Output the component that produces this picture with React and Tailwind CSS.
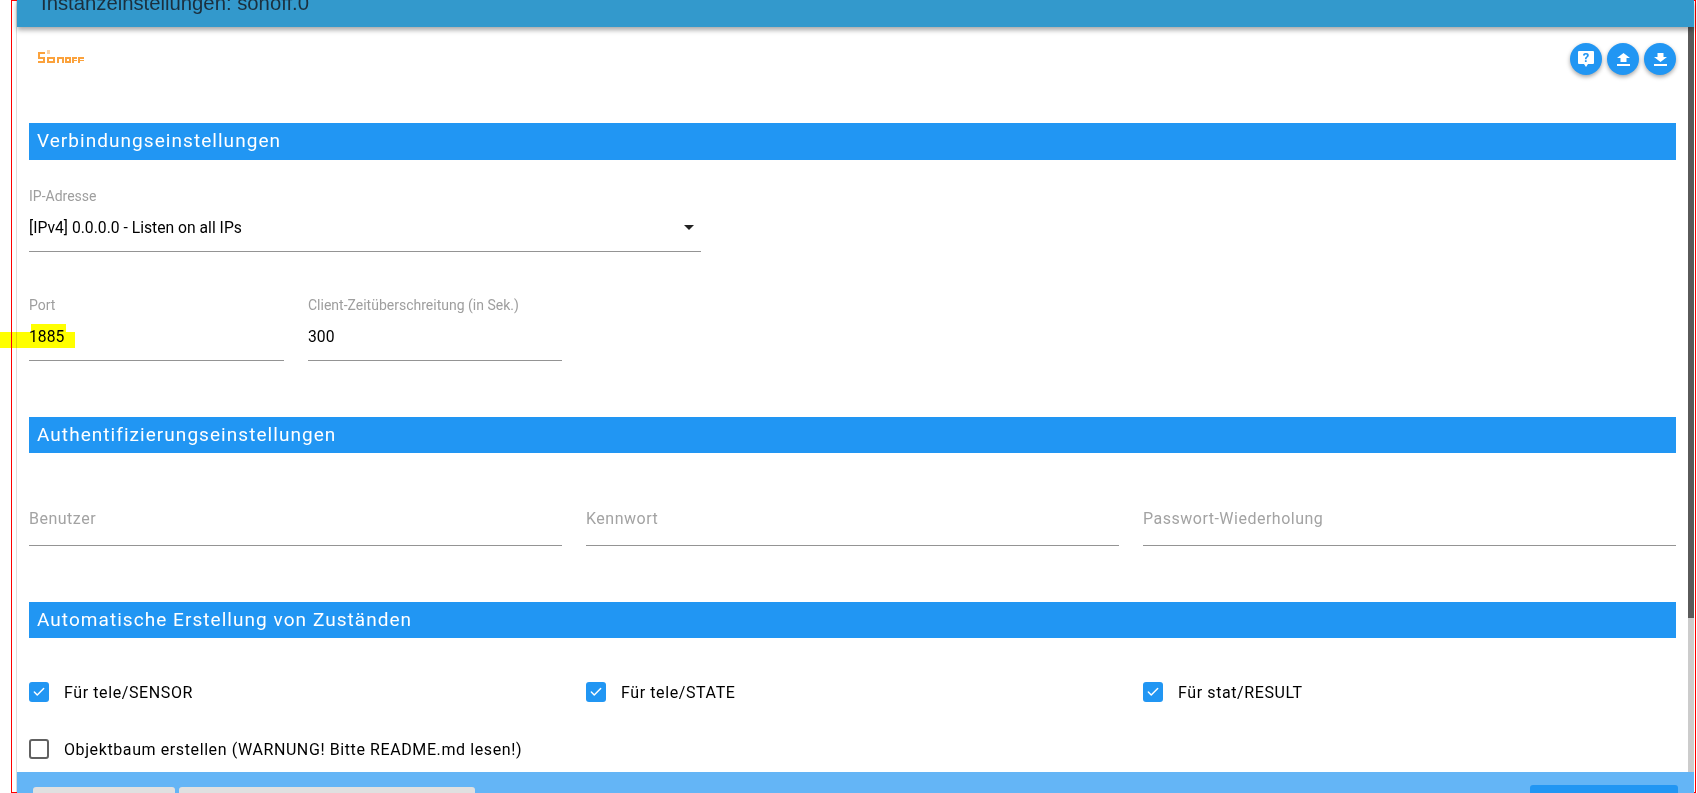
import { Check } from "lucide-react";

const font = { fontFamily: "Roboto, sans-serif" };

function SectionHeader({ title, className = "h-[36px]" }) {
  return (
    <div className={`${className} bg-[#2196f3] pl-2 flex items-center text-[19px] tracking-[1.05px] text-white`}>
      {title}
    </div>
  );
}

function Field({ label, value, className }) {
  return (
    <div className={className}>
      <div className="text-[14px] leading-[12px] text-[#9e9e9e]">{label}</div>
      <div className="mt-[11px] h-[39px] border-b border-[#949494] text-[15.7px] leading-[30px] text-black">
        {value}
      </div>
    </div>
  );
}

function EmptyField({ label }) {
  return (
    <div className="h-[40px] border-b border-[#949494] text-[16px] leading-[26px] tracking-[0.5px] text-[#a3a3a3]">
      {label}
    </div>
  );
}

function CheckItem({ label, checked = true }) {
  return (
    <div className="flex items-center gap-[15px] text-[16px] leading-[24px] tracking-[0.6px] text-black">
      {checked ? (
        <div className="w-5 h-5 rounded-[3px] bg-[#2196f3] flex items-center justify-center">
          <Check size={14} strokeWidth={2.5} className="text-white" />
        </div>
      ) : (
        <div className="w-5 h-5 rounded-[3px] border-2 border-[#616161]" />
      )}
      <span className="mt-[2px]">{label}</span>
    </div>
  );
}

function RoundButton({ children }) {
  return (
    <button className="w-8 h-8 rounded-full bg-[#2196f3] shadow-[0_2px_4px_rgba(0,0,0,0.35)] flex items-center justify-center">
      {children}
    </button>
  );
}

export default function App() {
  return (
    <div className="relative h-[793px] w-[1697px] overflow-hidden bg-white" style={font}>
      {/* Panel */}
      <div className="ml-[16px] mr-[3px] h-full flex flex-col border-l border-[#dddddd]">
        <div className="h-[27px] shrink-0 bg-[#3399cc] shadow-[0_3px_5px_rgba(0,0,0,0.35)] pl-[24px] z-10 overflow-hidden">
          <div className="-mt-[11px] text-[20.3px] leading-[28px] text-[#1b2f3d]" style={{ fontFamily: "'Liberation Sans', sans-serif" }}>
            Instanzeinstellungen: sonoff.0
          </div>
        </div>

        <div className="flex-1 min-h-0 flex">
          <div className="flex-1 min-w-0 pl-3 pr-3 pt-[16px]">
            <div className="flex justify-between items-start h-[80px]">
              <svg width="46" height="14" viewBox="0 0 46 14" className="ml-[9px] mt-[7px]">
                <g fill="#fba23c">
                  {/* S */}
                  <path d="M0 2h7v2H2v3h5v6H0v-2h5V9H0z" />
                  <rect x="9" y="0" width="3" height="4" fill="#fbd2a5" />
                  {/* o */}
                  <path fillRule="evenodd" d="M9 7h8v6H9zM11 9v2h4V9z" />
                  {/* n */}
                  <path d="M19 7h7v6h-2V9h-3v4h-2z" />
                  {/* o */}
                  <path fillRule="evenodd" d="M27 7h6v6h-6zM29 9v2h2V9z" />
                  {/* f */}
                  <path d="M34 7h5v2h-3v1h3v1h-3v2h-2z" />
                  {/* f */}
                  <path d="M40 7h6v2h-4v1h4v1h-4v2h-2z" />
                </g>
              </svg>
              <div className="flex gap-[5px]">
                <RoundButton>
                  <svg width="16" height="17" viewBox="0 0 16 17" className="overflow-visible">
                    <path fill="#fff" d="M1 0h14a1 1 0 0 1 1 1v11a1 1 0 0 1-1 1h-5l-2 3-2-3H1a1 1 0 0 1-1-1V1a1 1 0 0 1 1-1z" />
                    <text x="8" y="11" fontSize="13" fontWeight="700" textAnchor="middle" fill="#2196f3">?</text>
                  </svg>
                </RoundButton>
                <RoundButton>
                  <svg width="13" height="13" viewBox="0 0 13 13">
                    <path fill="#fff" d="M3.500 9V5H0l6.500-5L13 5H9.500v4zM0 11h13v2H0z" />
                  </svg>
                </RoundButton>
                <RoundButton>
                  <svg width="13" height="13" viewBox="0 0 13 13">
                    <path fill="#fff" d="M3.500 0h6v4H13l-6.500 5L0 4h3.500zM0 11h13v2H0z" />
                  </svg>
                </RoundButton>
              </div>
            </div>

            <SectionHeader title="Verbindungseinstellungen" className="h-[37px]" />

            <div className="mt-[30px] w-[672px] relative">
              <Field label="IP-Adresse" value="[IPv4] 0.0.0.0 - Listen on all IPs" />
              <div className="absolute right-[7px] top-[35px] border-x-[5px] border-x-transparent border-t-[5px] border-t-[#222]" />
            </div>

            <div className="mt-[47px] flex gap-6">
              <Field className="w-[255px]" label="Port" value="1885" />
              <Field className="w-[254px]" label="Client-Zeitüberschreitung (in Sek.)" value="300" />
            </div>

            <div className="mt-[56px]">
              <SectionHeader title="Authentifizierungseinstellungen" />
            </div>

            <div className="mt-[53px] grid grid-cols-3 gap-6">
              <EmptyField label="Benutzer" />
              <EmptyField label="Kennwort" />
              <EmptyField label="Passwort-Wiederholung" />
            </div>

            <div className="mt-[56px]">
              <SectionHeader title="Automatische Erstellung von Zuständen" />
            </div>

            <div className="mt-[41px] grid grid-cols-3 gap-6">
              <CheckItem label="Für tele/SENSOR" />
              <CheckItem label="Für tele/STATE" />
              <CheckItem label="Für stat/RESULT" />
            </div>
            <div className="mt-[31px]">
              <CheckItem label="Objektbaum erstellen (WARNUNG! Bitte README.md lesen!)" checked={false} />
            </div>
          </div>

          {/* Scrollbar */}
          <div className="w-[6px] shrink-0 flex flex-col">
            <div className="h-[591px] bg-[#5a5a5a]" />
            <div className="flex-1 bg-[#cccccc]" />
          </div>
        </div>

        {/* Footer bar, cut off by the screenshot edge */}
        <div className="h-[21px] shrink-0 bg-[#64b5f6] flex justify-between px-4 overflow-hidden -mt-[21px] z-10">
          <div className="flex gap-1 pt-[15px]">
            <div className="w-[142px] h-[20px] rounded-t-[3px] bg-[#e0e0e0]" />
            <div className="w-[296px] h-[20px] rounded-t-[3px] bg-[#e0e0e0]" />
          </div>
          <div className="pt-[13px]">
            <div className="w-[148px] h-[20px] rounded-t-[3px] bg-[#2196f3]" />
          </div>
        </div>
      </div>

      {/* Yellow marker over the port value */}
      <div className="absolute left-0 top-[332px] w-[75px] h-[16px] bg-[#ffff00] mix-blend-multiply" />
      <div className="absolute left-[31px] top-[324px] w-[35px] h-[8px] bg-[#ffff00] mix-blend-multiply" />

      {/* Red screenshot frame */}
      <div className="absolute left-[11px] top-0 right-[1px] bottom-0 border border-[#ff0000] pointer-events-none" />
    </div>
  );
}
